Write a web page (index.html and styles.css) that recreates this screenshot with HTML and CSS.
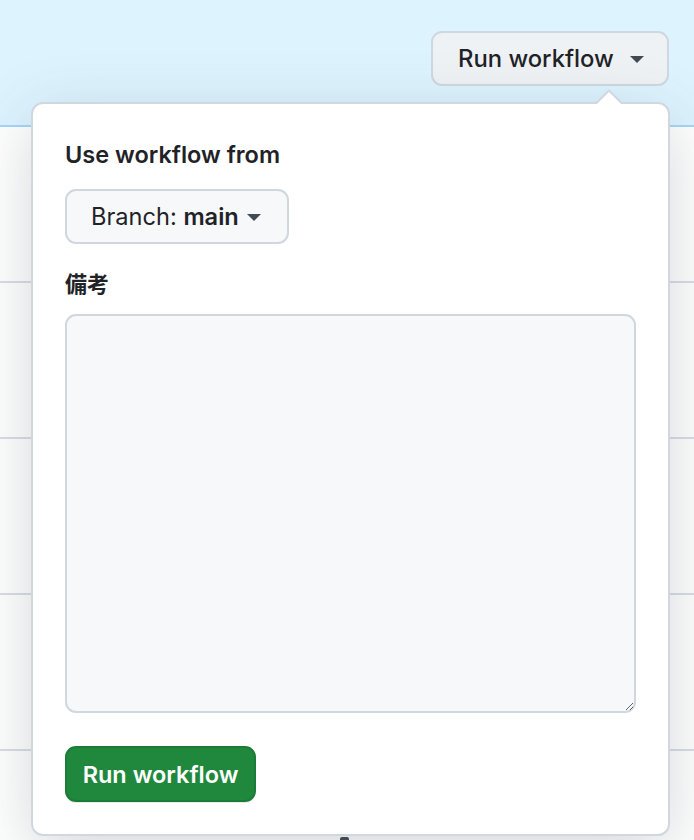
FILE: index.html
```html
<!DOCTYPE html>
<html>
<head>
<meta charset="utf-8">
<link rel="stylesheet" href="styles.css">
</head>
<body>
<div class="page">
  <header class="banner">
    <button class="btn btn-top">Run workflow <span class="caret"></span></button>
  </header>
  <div class="rows">
    <div class="row"></div>
    <div class="row"></div>
    <div class="row"></div>
    <div class="row"></div>
    <div class="row last"></div>
  </div>
  <div class="popover">
    <div class="label">Use workflow from</div>
    <button class="btn btn-branch">Branch: <strong>main</strong> <span class="caret"></span></button>
    <div class="label label-cjk">備考</div>
    <div class="textarea-wrap">
      <textarea class="textarea"></textarea>
    </div>
    <button class="btn btn-primary">Run workflow</button>
  </div>
  <div class="peek"></div>
</div>
</body>
</html>
```
FILE: styles.css
```css
* { box-sizing: border-box; }
html, body { margin: 0; padding: 0; }
body {
  width: 694px;
  height: 840px;
  overflow: hidden;
  background: #ffffff;
  font-family: Inter, "Noto Sans CJK JP", sans-serif;
  color: #1f2328;
}
.page { position: relative; width: 694px; height: 840px; overflow: hidden; }
.banner {
  height: 127px;
  background: #ddf4ff;
  border-bottom: 2px solid #a5d6fb;
  display: flex;
  justify-content: flex-end;
  align-items: flex-start;
  padding: 31px 25px 0 0;
}
.btn {
  font-family: inherit;
  border: 2px solid #d0d7de;
  border-radius: 11px;
  display: inline-flex;
  align-items: center;
  cursor: pointer;
}
.btn-top {
  height: 55px;
  width: 238px;
  background: #eff2f5;
  font-size: 23.8px;
  font-weight: 500;
  color: #1f2328;
  padding: 0 0 0 25px;
  gap: 16px;
}
.caret {
  width: 0; height: 0;
  border-left: 7px solid transparent;
  border-right: 7px solid transparent;
  border-top: 7px solid #424a53;
  margin-top: 2px;
}
.rows { display: flex; flex-direction: column; }
.row { height: 156px; border-bottom: 2px solid #d8dee4; flex: none; }
.row.last { height: 90px; border-bottom: 0; }
.popover {
  position: absolute;
  left: 31px;
  top: 102px;
  width: 639px;
  height: 734px;
  background: #fff;
  border: 2px solid #d0d7de;
  border-radius: 12px;
  box-shadow: 0 16px 64px rgba(66, 74, 83, 0.22);
  padding: 35px 33px 0 32px;
  display: flex;
  flex-direction: column;
  align-items: flex-start;
}
.popover::before {
  content: "";
  position: absolute;
  top: -15px;
  right: 44px;
  width: 0; height: 0;
  border-left: 15px solid transparent;
  border-right: 15px solid transparent;
  border-bottom: 15px solid #d0d7de;
}
.popover::after {
  content: "";
  position: absolute;
  top: -12px;
  right: 46px;
  width: 0; height: 0;
  border-left: 13px solid transparent;
  border-right: 13px solid transparent;
  border-bottom: 13px solid #ffffff;
}
.label {
  font-size: 23.5px;
  font-weight: 600;
  line-height: 32px;
  color: #1f2328;
}
.btn-branch {
  margin-top: 18px;
  height: 55px;
  width: 224px;
  background: #f6f8fa;
  font-size: 23.6px;
  font-weight: 400;
  color: #1f2328;
  padding: 0 0 0 24px;
  gap: 0;
  white-space: pre;
}
.btn-branch strong { font-weight: 600; }
.btn-branch .caret { margin-left: 8px; }
.label-cjk { margin-top: 22px; font-family: "Noto Sans CJK JP", sans-serif; font-weight: 700; font-size: 22px; }
.textarea-wrap { margin-top: 16px; width: 571px; height: 399px; }
.textarea {
  width: 100%;
  height: 100%;
  display: block;
  background: #f6f8fa;
  border: 2px solid #d0d7de;
  border-radius: 11px;
  resize: vertical;
}
.btn-primary {
  margin-top: 33px;
  height: 56px;
  width: 191px;
  background: #1f883d;
  border-color: #1b7c37;
  color: #ffffff;
  font-size: 23.5px;
  font-weight: 600;
  justify-content: center;
  box-shadow: 0 1px 0 rgba(31, 35, 40, 0.1);
}
.peek {
  position: absolute;
  left: 340px;
  top: 837px;
  width: 9px;
  height: 4px;
  background: #424a53;
  border-radius: 2px 2px 0 0;
}
```
